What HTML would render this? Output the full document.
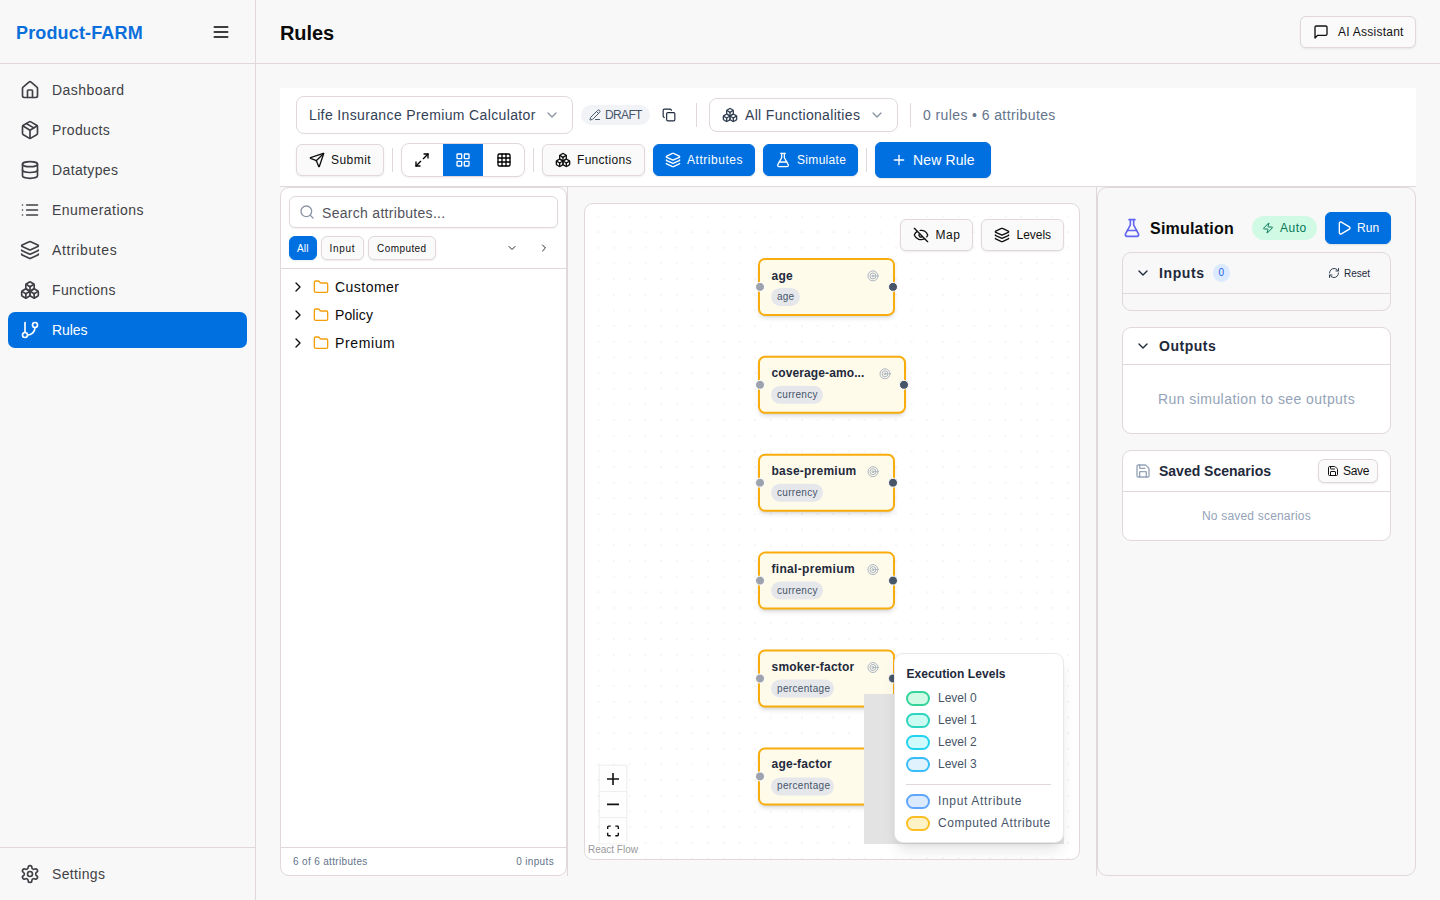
<!DOCTYPE html>
<html lang="en">
<head>
<meta charset="utf-8">
<title>Rules - Product-FARM</title>
<style>
:root{--f:"Liberation Sans",sans-serif;--bd:#e0d8da;--bg:#f8f8f8;--blue:#0070e0;--tx:#18181b;}
*{box-sizing:border-box;margin:0;padding:0}
html,body{width:1440px;height:900px;overflow:hidden;background:var(--bg);font-family:var(--f);color:var(--tx);font-size:14px}
svg{display:block;fill:none;stroke:currentColor;stroke-width:2;stroke-linecap:round;stroke-linejoin:round;flex:none}
.abs{position:absolute}
.t{white-space:nowrap;display:inline-block}
/* sidebar */
#sb{position:absolute;left:0;top:0;width:256px;height:900px;border-right:1px solid var(--bd);background:var(--bg)}
#sbh{position:absolute;left:0;top:0;width:255px;height:64px;border-bottom:1px solid var(--bd)}
#logo{position:absolute;left:16px;top:21px;font-size:18px;font-weight:700;color:#0a6fdb;line-height:24px}
#menu{position:absolute;left:211px;top:22px;width:20px;height:20px;color:#000}
.nav{position:absolute;left:8px;width:239px;height:36px;border-radius:7px;color:#3f3f46;font-size:14px}
.nav svg{position:absolute;left:12px;top:8px;width:20px;height:20px}
.nav .t{position:absolute;left:44px;top:8px;line-height:20px}
.nav.on{background:var(--blue);color:#fff}
#sbf{position:absolute;left:0;top:847px;width:255px;height:53px;border-top:1px solid var(--bd)}
/* header */
#hd{position:absolute;left:256px;top:0;width:1184px;height:64px;border-bottom:1px solid var(--bd)}
#ttl{position:absolute;left:24px;top:18.5px;font-size:20px;font-weight:700;line-height:28px;color:#0a0a0a}
.btn{position:absolute;border:1px solid var(--bd);border-radius:6px;background:#fafafa;box-shadow:0 1px 2px rgba(0,0,0,.08);color:#111;font-size:12px}
.btn svg{position:absolute}
.btn .t{position:absolute}

/* toolbar */
#tb{position:absolute;left:280px;top:88px;width:1136px;height:99px;background:#fff;border-bottom:1px solid var(--bd)}
.sel{position:absolute;border:1px solid var(--bd);border-radius:8px;background:#fff;font-size:14px;color:#334155}
.sel .t{position:absolute;line-height:20px}
.sel svg{position:absolute}
.sep{position:absolute;width:1px;height:24px;background:var(--bd)}
.ic16{width:16px;height:16px}
.ic14{width:14px;height:14px}
.ic12{width:12px;height:12px}
.bb{background:var(--blue);border-color:var(--blue);color:#fff;box-shadow:0 1px 2px rgba(0,0,0,.1)}
#draft{position:absolute;left:301px;top:17px;width:69px;height:20px;border-radius:10px;background:#f1f3f6;color:#475569;font-size:12px}
#draft svg{position:absolute;left:8px;top:4px}
#draft .t{position:absolute;left:24px;top:2px;line-height:16px}
#tg{position:absolute;left:121px;top:55px;width:124px;height:34px;border:1px solid var(--bd);border-radius:8px;background:#fff;overflow:hidden;box-shadow:0 1px 2px rgba(0,0,0,.05)}
#tg svg{position:absolute;top:8px;color:#000}
#tg .on{position:absolute;left:41px;top:0;width:40px;height:32px;background:var(--blue)}

/* left panel */
#lpw{position:absolute;left:280px;top:187px;width:288px;height:689px;border-right:1px solid var(--bd)}
#lp{position:absolute;left:0;top:0;width:287px;height:689px;border:1px solid var(--bd);border-radius:9px;background:#fff}
#srch{position:absolute;left:8px;top:8px;width:269px;height:32px;border:1px solid var(--bd);border-radius:6px;background:#fff;box-shadow:0 1px 2px rgba(0,0,0,.06)}
#srch svg{position:absolute;left:9px;top:7px;color:#8b95a5}
#srch .t{position:absolute;left:32px;top:6px;line-height:20px;font-size:14px;color:#52525b}
.chip{position:absolute;top:48px;height:24px;border:1px solid var(--bd);border-radius:6px;background:#fafafa;font-size:10px;color:#111;box-shadow:0 1px 2px rgba(0,0,0,.08)}
.chip .t{position:absolute;top:5px;line-height:14px}
.chip.on{background:var(--blue);border-color:var(--blue);color:#fff}
#lpd{position:absolute;left:0;top:80px;width:285px;height:1px;background:var(--bd)}
.tr{position:absolute;left:0;width:285px;height:28px;font-size:14px;color:#0a0a0a}
.tr svg{position:absolute;top:6px}
.tr .t{position:absolute;left:54px;top:4px;line-height:20px}
#lpf{position:absolute;left:0;top:659px;width:285px;height:28px;border-top:1px solid var(--bd);font-size:10px;color:#64748b}
#lpf .t{position:absolute;top:7px;line-height:14px}
/* canvas */
#cv{position:absolute;left:584px;top:203px;width:496px;height:657px;border:1px solid var(--bd);border-radius:9px;background:#fff;overflow:hidden;
 background-image:radial-gradient(circle,#eeeef3 0.5px,transparent 1px);background-size:15.67px 15.67px;background-position:5.67px 4.67px}
.nd{position:absolute;height:58px;border:2px solid #f8ad0c;border-radius:7px;background:#fffbeb;box-shadow:0 3px 5px -1px rgba(0,0,0,.12),0 2px 3px -2px rgba(0,0,0,.1)}
.nd .nm{position:absolute;left:11.5px;top:7.4px;font-size:12px;font-weight:600;line-height:16px;color:#1e293b}
.nd .bdg{position:absolute;left:11px;top:28px;height:18px;border-radius:10px;background:#e5e7eb;font-size:10px;color:#475569}
.nd .bdg .t{position:absolute;left:6px;top:1.6px;line-height:13px}
.nd .tg{position:absolute;top:9.5px;width:12px;height:12px;color:#94a3b8;stroke-width:1.6}
.hl,.hr{position:absolute;top:22px;width:10px;height:10px;border-radius:50%;border:1px solid #fff}
.hl{left:-5px;background:#9ca3af}
.hr{right:-5px;background:#475569}
#mm{position:absolute;left:279px;top:490px;width:200px;height:150px;background:#e3e3e3}
#lg{position:absolute;left:309px;top:449px;width:170px;height:190px;border:1px solid #ebe6e7;border-radius:9px;background:#fff;box-shadow:0 10px 15px -3px rgba(0,0,0,.1),0 4px 6px -4px rgba(0,0,0,.1);font-size:12px;color:#475569}
#lg .h{position:absolute;left:11.5px;top:12px;line-height:16px;font-weight:700;color:#1e293b}
.sw{position:absolute;left:11px;margin-top:-0.5px;width:24px;height:15px;border:2px solid;border-radius:8px}
#lg .l{position:absolute;left:43px;line-height:16px}
#ctl{position:absolute;left:15px;top:562px;width:26px;height:78px;background:#fff;box-shadow:0 0 2px 1px rgba(0,0,0,.08)}
#ctl div{position:relative;width:26px;height:26px;border-bottom:1px solid #eee;background:#fefefe}
#ctl svg{position:absolute;left:7px;top:7px;width:12px;height:12px;color:#111}
#rf{position:absolute;left:0;top:637px;height:18px;padding:2px 3px;font-size:10px;line-height:14px;color:#999;background:rgba(255,255,255,.5)}
/* sim */
#spw{position:absolute;left:1096px;top:187px;width:320px;height:689px;border-left:1px solid var(--bd)}
#sp{position:absolute;left:0;top:0;width:319px;height:689px;border:1px solid var(--bd);border-radius:10px;background:var(--bg)}
.cd{position:absolute;left:24px;width:269px;border:1px solid var(--bd);border-radius:9px;background:#fff}
.cd .hd{position:absolute;left:0;top:0;width:267px;border-bottom:1px solid var(--bd)}
.cd .ht{position:absolute;left:36px;font-size:14px;font-weight:700;line-height:20px;color:#1e293b}
</style>
</head>
<body>
<svg width="0" height="0" style="position:absolute">
<defs>
<symbol id="i-home" viewBox="0 0 24 24"><path d="M15 21v-8a1 1 0 0 0-1-1h-4a1 1 0 0 0-1 1v8"/><path d="M3 10a2 2 0 0 1 .709-1.528l7-5.999a2 2 0 0 1 2.582 0l7 5.999A2 2 0 0 1 21 10v9a2 2 0 0 1-2 2H5a2 2 0 0 1-2-2z"/></symbol>
<symbol id="i-package" viewBox="0 0 24 24"><path d="M11 21.73a2 2 0 0 0 2 0l7-4A2 2 0 0 0 21 16V8a2 2 0 0 0-1-1.73l-7-4a2 2 0 0 0-2 0l-7 4A2 2 0 0 0 3 8v8a2 2 0 0 0 1 1.73z"/><path d="M12 22V12"/><path d="m3.3 7 7.703 4.734a2 2 0 0 0 1.994 0L20.7 7"/><path d="m7.5 4.27 9 5.15"/></symbol>
<symbol id="i-db" viewBox="0 0 24 24"><ellipse cx="12" cy="5" rx="9" ry="3"/><path d="M3 5V19A9 3 0 0 0 21 19V5"/><path d="M3 12A9 3 0 0 0 21 12"/></symbol>
<symbol id="i-list" viewBox="0 0 24 24"><path d="M3 12h.01"/><path d="M3 18h.01"/><path d="M3 6h.01"/><path d="M8 12h13"/><path d="M8 18h13"/><path d="M8 6h13"/></symbol>
<symbol id="i-layers" viewBox="0 0 24 24"><path d="M12.83 2.18a2 2 0 0 0-1.66 0L2.6 6.08a1 1 0 0 0 0 1.83l8.58 3.91a2 2 0 0 0 1.66 0l8.58-3.9a1 1 0 0 0 0-1.83z"/><path d="M2 12a1 1 0 0 0 .58.91l8.6 3.91a2 2 0 0 0 1.65 0l8.58-3.9A1 1 0 0 0 22 12"/><path d="M2 17a1 1 0 0 0 .58.91l8.6 3.91a2 2 0 0 0 1.65 0l8.58-3.9A1 1 0 0 0 22 17"/></symbol>
<symbol id="i-boxes" viewBox="0 0 24 24"><path d="M2.97 12.92A2 2 0 0 0 2 14.63v3.24a2 2 0 0 0 .97 1.71l3 1.8a2 2 0 0 0 2.06 0L12 19v-5.5l-5-3-4.03 2.42Z"/><path d="m7 16.5-4.74-2.85"/><path d="m7 16.5 5-3"/><path d="M7 16.5v5.17"/><path d="M12 13.5V19l3.97 2.38a2 2 0 0 0 2.06 0l3-1.8a2 2 0 0 0 .97-1.71v-3.24a2 2 0 0 0-.97-1.71L17 10.5l-5 3Z"/><path d="m17 16.5-5-3"/><path d="m17 16.5 4.74-2.85"/><path d="M17 16.5v5.17"/><path d="M7.97 4.42A2 2 0 0 0 7 6.13v4.37l5 3 5-3V6.13a2 2 0 0 0-.97-1.71l-3-1.8a2 2 0 0 0-2.06 0l-3 1.8Z"/><path d="M12 8 7.26 5.15"/><path d="m12 8 4.74-2.85"/><path d="M12 13.5V8"/></symbol>
<symbol id="i-git" viewBox="0 0 24 24"><line x1="6" x2="6" y1="3" y2="15"/><circle cx="18" cy="6" r="3"/><circle cx="6" cy="18" r="3"/><path d="M18 9a9 9 0 0 1-9 9"/></symbol>
<symbol id="i-settings" viewBox="0 0 24 24"><path d="M12.22 2h-.44a2 2 0 0 0-2 2v.18a2 2 0 0 1-1 1.73l-.43.25a2 2 0 0 1-2 0l-.15-.08a2 2 0 0 0-2.73.73l-.22.38a2 2 0 0 0 .73 2.73l.15.1a2 2 0 0 1 1 1.72v.51a2 2 0 0 1-1 1.74l-.15.09a2 2 0 0 0-.73 2.73l.22.38a2 2 0 0 0 2.73.73l.15-.08a2 2 0 0 1 2 0l.43.25a2 2 0 0 1 1 1.73V20a2 2 0 0 0 2 2h.44a2 2 0 0 0 2-2v-.18a2 2 0 0 1 1-1.73l.43-.25a2 2 0 0 1 2 0l.15.08a2 2 0 0 0 2.73-.73l.22-.39a2 2 0 0 0-.73-2.73l-.15-.08a2 2 0 0 1-1-1.74v-.5a2 2 0 0 1 1-1.74l.15-.09a2 2 0 0 0 .73-2.73l-.22-.38a2 2 0 0 0-2.73-.73l-.15.08a2 2 0 0 1-2 0l-.43-.25a2 2 0 0 1-1-1.73V4a2 2 0 0 0-2-2z"/><circle cx="12" cy="12" r="3"/></symbol>
<symbol id="i-menu" viewBox="0 0 24 24"><line x1="4" x2="20" y1="12" y2="12"/><line x1="4" x2="20" y1="6" y2="6"/><line x1="4" x2="20" y1="18" y2="18"/></symbol>
<symbol id="i-msg" viewBox="0 0 24 24"><path d="M21 15a2 2 0 0 1-2 2H7l-4 4V5a2 2 0 0 1 2-2h14a2 2 0 0 1 2 2z"/></symbol>
<symbol id="i-cdown" viewBox="0 0 24 24"><path d="m6 9 6 6 6-6"/></symbol>
<symbol id="i-cright" viewBox="0 0 24 24"><path d="m9 18 6-6-6-6"/></symbol>
<symbol id="i-send" viewBox="0 0 24 24"><path d="M14.536 21.686a.5.5 0 0 0 .937-.024l6.5-19a.496.496 0 0 0-.635-.635l-19 6.5a.5.5 0 0 0-.024.937l7.93 3.18a2 2 0 0 1 1.112 1.11z"/><path d="m21.854 2.147-10.94 10.939"/></symbol>
<symbol id="i-max" viewBox="0 0 24 24"><polyline points="15 3 21 3 21 9"/><polyline points="9 21 3 21 3 15"/><line x1="21" x2="14" y1="3" y2="10"/><line x1="3" x2="10" y1="21" y2="14"/></symbol>
<symbol id="i-grid" viewBox="0 0 24 24"><rect width="7" height="7" x="3" y="3" rx="1"/><rect width="7" height="7" x="14" y="3" rx="1"/><rect width="7" height="7" x="14" y="14" rx="1"/><rect width="7" height="7" x="3" y="14" rx="1"/></symbol>
<symbol id="i-table" viewBox="0 0 24 24"><rect width="18" height="18" x="3" y="3" rx="2"/><path d="M3 9h18"/><path d="M3 15h18"/><path d="M9 3v18"/><path d="M15 3v18"/></symbol>
<symbol id="i-copy" viewBox="0 0 24 24"><rect width="14" height="14" x="8" y="8" rx="2" ry="2"/><path d="M4 16c-1.1 0-2-.9-2-2V4c0-1.1.9-2 2-2h10c1.1 0 2 .9 2 2"/></symbol>
<symbol id="i-pencil" viewBox="0 0 24 24"><path d="M13 21h8"/><path d="m15 5 4 4"/><path d="M21.174 6.812a1 1 0 0 0-3.986-3.987L3.842 16.174a2 2 0 0 0-.5.83l-1.321 4.352a.5.5 0 0 0 .623.622l4.353-1.32a2 2 0 0 0 .83-.497z"/></symbol>
<symbol id="i-flask" viewBox="0 0 24 24"><path d="M14 2v6a2 2 0 0 0 .245.96l5.51 10.08A2 2 0 0 1 18 22H6a2 2 0 0 1-1.755-2.96l5.51-10.08A2 2 0 0 0 10 8V2"/><path d="M6.453 15h11.094"/><path d="M8.5 2h7"/></symbol>
<symbol id="i-plus" viewBox="0 0 24 24"><path d="M5 12h14"/><path d="M12 5v14"/></symbol>
<symbol id="i-search" viewBox="0 0 24 24"><circle cx="11" cy="11" r="8"/><path d="m21 21-4.3-4.3"/></symbol>
<symbol id="i-folder" viewBox="0 0 24 24"><path d="M20 20a2 2 0 0 0 2-2V8a2 2 0 0 0-2-2h-7.9a2 2 0 0 1-1.69-.9L9.6 3.9A2 2 0 0 0 7.93 3H4a2 2 0 0 0-2 2v13a2 2 0 0 0 2 2Z"/></symbol>
<symbol id="i-eyeoff" viewBox="0 0 24 24"><path d="M10.733 5.076a10.744 10.744 0 0 1 11.205 6.575 1 1 0 0 1 0 .696 10.747 10.747 0 0 1-1.444 2.49"/><path d="M14.084 14.158a3 3 0 0 1-4.242-4.242"/><path d="M17.479 17.499a10.75 10.75 0 0 1-15.417-5.151 1 1 0 0 1 0-.696 10.75 10.75 0 0 1 4.446-5.143"/><path d="m2 2 20 20"/></symbol>
<symbol id="i-zap" viewBox="0 0 24 24"><path d="M4 14a1 1 0 0 1-.78-1.63l9.9-10.2a.5.5 0 0 1 .86.46l-1.92 6.02A1 1 0 0 0 13 10h7a1 1 0 0 1 .78 1.63l-9.9 10.2a.5.5 0 0 1-.86-.46l1.92-6.02A1 1 0 0 0 11 14z"/></symbol>
<symbol id="i-play" viewBox="0 0 24 24"><path d="M5 5a2 2 0 0 1 3.008-1.728l11.997 6.998a2 2 0 0 1 .003 3.458l-12 7A2 2 0 0 1 5 19z"/></symbol>
<symbol id="i-refresh" viewBox="0 0 24 24"><path d="M3 12a9 9 0 0 1 9-9 9.75 9.75 0 0 1 6.74 2.74L21 8"/><path d="M21 3v5h-5"/><path d="M21 12a9 9 0 0 1-9 9 9.75 9.75 0 0 1-6.74-2.74L3 16"/><path d="M8 16H3v5"/></symbol>
<symbol id="i-save" viewBox="0 0 24 24"><path d="M15.2 3a2 2 0 0 1 1.4.6l3.8 3.8a2 2 0 0 1 .6 1.4V19a2 2 0 0 1-2 2H5a2 2 0 0 1-2-2V5a2 2 0 0 1 2-2z"/><path d="M17 21v-7a1 1 0 0 0-1-1H8a1 1 0 0 0-1 1v7"/><path d="M7 3v4a1 1 0 0 0 1 1h7"/></symbol>
<symbol id="i-target" viewBox="0 0 24 24"><circle cx="12" cy="12" r="10"/><circle cx="12" cy="12" r="6"/><circle cx="12" cy="12" r="2"/></symbol>
<symbol id="i-fit" viewBox="0 0 32 30"><path d="M3.692 4.63c0-.53.4-.938.939-.938h5.215V0H4.708C2.13 0 0 2.054 0 4.63v5.216h3.692V4.631zM27.354 0h-5.2v3.692h5.17c.53 0 .984.4.984.939v5.215H32V4.631A4.624 4.624 0 0027.354 0zm.954 24.83c0 .532-.4.94-.939.94h-5.215v3.768h5.215c2.577 0 4.631-2.13 4.631-4.707v-5.139h-3.692v5.139zm-23.677.94c-.531 0-.939-.4-.939-.94v-5.138H0v5.139c0 2.577 2.13 4.707 4.708 4.707h5.138V25.77H4.631z" fill="currentColor" stroke="none"/></symbol>
</defs>
</svg>

<!-- SIDEBAR -->
<div id="sb">
  <div id="sbh">
    <div id="logo" class="t" style="letter-spacing:0.151px">Product-FARM</div>
    <svg id="menu"><use href="#i-menu"/></svg>
  </div>
  <div class="nav" style="top:72px"><svg><use href="#i-home"/></svg><span class="t" style="letter-spacing:0.443px">Dashboard</span></div>
  <div class="nav" style="top:112px"><svg><use href="#i-package"/></svg><span class="t" style="letter-spacing:0.367px">Products</span></div>
  <div class="nav" style="top:152px"><svg><use href="#i-db"/></svg><span class="t" style="letter-spacing:0.372px">Datatypes</span></div>
  <div class="nav" style="top:192px"><svg><use href="#i-list"/></svg><span class="t" style="letter-spacing:0.462px">Enumerations</span></div>
  <div class="nav" style="top:232px"><svg><use href="#i-layers"/></svg><span class="t" style="letter-spacing:0.623px">Attributes</span></div>
  <div class="nav" style="top:272px"><svg><use href="#i-boxes"/></svg><span class="t" style="letter-spacing:0.344px">Functions</span></div>
  <div class="nav on" style="top:312px"><svg><use href="#i-git"/></svg><span class="t" style="letter-spacing:-0.044px">Rules</span></div>
  <div id="sbf">
    <div class="nav" style="top:8px"><svg><use href="#i-settings"/></svg><span class="t" style="letter-spacing:0.336px">Settings</span></div>
  </div>
</div>

<!-- HEADER -->
<div id="hd">
  <div id="ttl" class="t" style="letter-spacing:-0.081px">Rules</div>
  <div class="btn" style="left:1044px;top:16px;width:116px;height:32px"><svg style="left:12px;top:7px;width:16px;height:16px"><use href="#i-msg"/></svg><span class="t" style="letter-spacing:0.249px;left:37px;top:7px;line-height:16px">AI Assistant</span></div>
</div>


<div id="tb">
  <div class="sel" style="left:16px;top:8px;width:277px;height:38px"><span class="t" style="letter-spacing:0.363px;left:12px;top:8px">Life Insurance Premium Calculator</span><svg class="ic16" style="left:247px;top:10px;color:#8b94a3"><use href="#i-cdown"/></svg></div>
  <div id="draft"><svg class="ic12"><use href="#i-pencil"/></svg><span class="t" style="letter-spacing:-0.641px">DRAFT</span></div>
  <svg class="abs ic14" style="left:382px;top:20px;color:#1e293b"><use href="#i-copy"/></svg>
  <div class="sep" style="left:416px;top:15px"></div>
  <div class="sel" style="left:429px;top:10px;width:189px;height:34px"><svg class="ic16" style="left:12px;top:8px;color:#334155"><use href="#i-boxes"/></svg><span class="t" style="letter-spacing:0.331px;left:35px;top:6px">All Functionalities</span><svg class="ic16" style="left:159px;top:8px;color:#8b94a3"><use href="#i-cdown"/></svg></div>
  <div class="sep" style="left:630px;top:15px"></div>
  <span class="t abs" style="letter-spacing:0.4px;left:643px;top:17px;line-height:20px;font-size:14px;color:#64748b">0 rules • 6 attributes</span>

  <div class="btn" style="left:16px;top:56px;width:88px;height:32px"><svg class="ic16" style="left:12px;top:7px"><use href="#i-send"/></svg><span class="t" style="letter-spacing:0.448px;left:34px;top:7px;line-height:16px">Submit</span></div>
  <div class="sep" style="left:112px;top:60px"></div>
  <div id="tg"><div class="on"></div><svg class="ic16" style="left:12px"><use href="#i-max"/></svg><svg class="ic16" style="left:53px;color:#fff"><use href="#i-grid"/></svg><svg class="ic16" style="left:94px"><use href="#i-table"/></svg></div>
  <div class="sep" style="left:253px;top:60px"></div>
  <div class="btn" style="left:262px;top:56px;width:103px;height:32px"><svg class="ic16" style="left:12px;top:7px"><use href="#i-boxes"/></svg><span class="t" style="letter-spacing:0.295px;left:34px;top:7px;line-height:16px">Functions</span></div>
  <div class="btn bb" style="left:373px;top:56px;width:102px;height:32px"><svg class="ic16" style="left:11px;top:7px"><use href="#i-layers"/></svg><span class="t" style="letter-spacing:0.533px;left:33px;top:7px;line-height:16px">Attributes</span></div>
  <div class="btn bb" style="left:483px;top:56px;width:95px;height:32px"><svg class="ic16" style="left:11px;top:7px"><use href="#i-flask"/></svg><span class="t" style="letter-spacing:0.32px;left:33px;top:7px;line-height:16px">Simulate</span></div>
  <div class="sep" style="left:586px;top:60px"></div>
  <div class="btn bb" style="left:595px;top:54px;width:116px;height:36px;font-size:14px"><svg class="ic16" style="left:15px;top:9px"><use href="#i-plus"/></svg><span class="t" style="letter-spacing:0.135px;left:37px;top:7px;line-height:20px">New Rule</span></div>
</div>

<div id="lpw"><div id="lp">
  <div id="srch"><svg class="ic16"><use href="#i-search"/></svg><span class="t" style="letter-spacing:0.298px">Search attributes...</span></div>
  <div class="chip on" style="left:8px;width:27.6px"><span class="t" style="letter-spacing:0.146px;left:7px">All</span></div>
  <div class="chip" style="left:39.6px;width:43.5px"><span class="t" style="letter-spacing:0.653px;left:8px">Input</span></div>
  <div class="chip" style="left:87.1px;width:67.5px"><span class="t" style="letter-spacing:0.414px;left:8px">Computed</span></div>
  <svg class="abs ic12" style="left:225px;top:54px;color:#27272a"><use href="#i-cdown"/></svg>
  <svg class="abs ic12" style="left:257px;top:54px;color:#27272a"><use href="#i-cright"/></svg>
  <div id="lpd"></div>
  <div class="tr" style="top:85px"><svg class="ic16" style="left:9px;color:#111"><use href="#i-cright"/></svg><svg class="ic16" style="left:32px;color:#f59e0b"><use href="#i-folder"/></svg><span class="t" style="letter-spacing:0.477px">Customer</span></div>
  <div class="tr" style="top:113px"><svg class="ic16" style="left:9px;color:#111"><use href="#i-cright"/></svg><svg class="ic16" style="left:32px;color:#f59e0b"><use href="#i-folder"/></svg><span class="t" style="letter-spacing:0.112px">Policy</span></div>
  <div class="tr" style="top:141px"><svg class="ic16" style="left:9px;color:#111"><use href="#i-cright"/></svg><svg class="ic16" style="left:32px;color:#f59e0b"><use href="#i-folder"/></svg><span class="t" style="letter-spacing:0.614px">Premium</span></div>
  <div id="lpf"><span class="t" style="letter-spacing:0.335px;left:12px">6 of 6 attributes</span><span class="t" style="letter-spacing:0.348px;right:12px">0 inputs</span></div>
</div></div>

<div id="cv">
  <div class="nd" style="left:173px;top:54px;transform:translateY(-0.1px);width:137px"><span class="t nm" style="letter-spacing:0.292px;top:8.3px">age</span><div class="bdg" style="width:29px"><span class="t" style="letter-spacing:0.24px;top:2.4px">age</span></div><svg class="tg" style="left:107px"><use href="#i-target"/></svg><i class="hl"></i><i class="hr"></i></div>
  <div class="nd" style="left:173px;top:152px;transform:translateY(-0.2px);width:148.4px"><span class="t nm" style="letter-spacing:0.109px">coverage-amo...</span><div class="bdg" style="width:52px"><span class="t" style="letter-spacing:0.301px">currency</span></div><svg class="tg" style="left:118.6px"><use href="#i-target"/></svg><i class="hl"></i><i class="hr"></i></div>
  <div class="nd" style="left:173px;top:250px;transform:translateY(-0.3px);width:137px"><span class="t nm" style="letter-spacing:0.24px">base-premium</span><div class="bdg" style="width:52px"><span class="t" style="letter-spacing:0.301px">currency</span></div><svg class="tg" style="left:107px"><use href="#i-target"/></svg><i class="hl"></i><i class="hr"></i></div>
  <div class="nd" style="left:173px;top:348px;transform:translateY(-0.4px);width:137px"><span class="t nm" style="letter-spacing:0.309px">final-premium</span><div class="bdg" style="width:52px"><span class="t" style="letter-spacing:0.301px">currency</span></div><svg class="tg" style="left:107px"><use href="#i-target"/></svg><i class="hl"></i><i class="hr"></i></div>
  <div class="nd" style="left:173px;top:446px;transform:translateY(-0.5px);width:137px"><span class="t nm" style="letter-spacing:0.225px">smoker-factor</span><div class="bdg" style="width:63px"><span class="t" style="letter-spacing:0.331px">percentage</span></div><svg class="tg" style="left:107px"><use href="#i-target"/></svg><i class="hl"></i><i class="hr"></i></div>
  <div class="nd" style="left:173px;top:544px;transform:translateY(-0.6px);width:137px"><span class="t nm" style="letter-spacing:0.236px">age-factor</span><div class="bdg" style="width:63px"><span class="t" style="letter-spacing:0.331px">percentage</span></div><svg class="tg" style="left:107px"><use href="#i-target"/></svg><i class="hl"></i><i class="hr"></i></div>
  <div id="mm"></div>
  <div id="lg">
    <span class="t h" style="letter-spacing:0.062px">Execution Levels</span>
    <i class="sw" style="top:37px;border-color:#34d399;background:#d1fae5"></i><span class="t l" style="letter-spacing:0.009px;top:36px">Level 0</span>
    <i class="sw" style="top:59px;border-color:#2dd4bf;background:#ccfbf1"></i><span class="t l" style="letter-spacing:0.009px;top:58px">Level 1</span>
    <i class="sw" style="top:81px;border-color:#22d3ee;background:#cffafe"></i><span class="t l" style="letter-spacing:0.009px;top:80px">Level 2</span>
    <i class="sw" style="top:103px;border-color:#38bdf8;background:#e0f2fe"></i><span class="t l" style="letter-spacing:0.009px;top:102px">Level 3</span>
    <i class="sw" style="top:140px;border-color:#60a5fa;background:#dbeafe"></i><span class="t l" style="letter-spacing:0.664px;top:139px">Input Attribute</span>
    <i class="sw" style="top:162px;border-color:#fbbf24;background:#fef3c7"></i><span class="t l" style="letter-spacing:0.556px;top:161px">Computed Attribute</span>
    <i class="abs" style="left:11px;top:130px;width:145px;height:1px;background:var(--bd)"></i>
  </div>
  <div class="btn" style="left:315px;top:15px;width:73px;height:32px"><svg class="ic16" style="left:12px;top:7px"><use href="#i-eyeoff"/></svg><span class="t" style="letter-spacing:0.552px;left:34.5px;top:7px;line-height:16px">Map</span></div>
  <div class="btn" style="left:396px;top:15px;width:83px;height:32px"><svg class="ic16" style="left:12px;top:7px"><use href="#i-layers"/></svg><span class="t" style="letter-spacing:-0.026px;left:34.5px;top:7px;line-height:16px">Levels</span></div>
  <div id="ctl"><div><svg viewBox="0 0 32 32"><path d="M32 18.133H18.133V32h-4.266V18.133H0v-4.266h13.867V0h4.266v13.867H32z" fill="currentColor" stroke="none"/></svg></div><div><svg viewBox="0 0 32 32"><path d="M0 12.2h32v4.2H0z" fill="currentColor" stroke="none"/></svg></div><div><svg><use href="#i-fit"/></svg></div></div>
  <div id="rf" class="t" style="letter-spacing:-0.005px">React Flow</div>
</div>

<div id="spw"><div id="sp">
  <svg class="abs" style="left:24px;top:30px;width:20px;height:20px;color:#6366f1"><use href="#i-flask"/></svg>
  <span class="t abs" style="letter-spacing:0.211px;left:52px;top:29px;font-size:16px;font-weight:600;line-height:24px;color:#0a0a0a">Simulation</span>
  <div class="abs" style="left:154px;top:28px;width:65px;height:24px;border-radius:12px;background:#d1fae5;color:#047857;font-size:12px"><svg class="abs ic12" style="left:10px;top:6px"><use href="#i-zap"/></svg><span class="t abs" style="letter-spacing:0.5px;left:28px;top:4px;line-height:16px">Auto</span></div>
  <div class="btn bb" style="left:227px;top:24px;width:66px;height:32px"><svg class="ic16" style="left:10px;top:7px"><use href="#i-play"/></svg><span class="t" style="letter-spacing:0.094px;left:31px;top:7px;line-height:16px">Run</span></div>

  <div class="cd" style="top:64px;height:59px;background:var(--bg)">
    <div class="hd" style="height:41px"></div>
    <svg class="abs ic16" style="left:12px;top:12px;color:#1e293b"><use href="#i-cdown"/></svg>
    <span class="t ht" style="letter-spacing:0.602px;top:10px">Inputs</span>
    <div class="abs" style="left:90px;top:11px;width:17px;height:18px;border-radius:9px;background:#dbeafe;color:#2563eb;font-size:10px"><span class="t abs" style="letter-spacing:0.172px;left:5.5px;top:2px;line-height:14px">0</span></div>
    <svg class="abs ic12" style="left:205px;top:14px;color:#334155"><use href="#i-refresh"/></svg>
    <span class="t abs" style="letter-spacing:-0.044px;left:221px;top:14px;font-size:10px;line-height:14px;color:#1e293b">Reset</span>
  </div>

  <div class="cd" style="top:139px;height:107px">
    <div class="hd" style="height:37px"></div>
    <svg class="abs ic16" style="left:12px;top:10px;color:#1e293b"><use href="#i-cdown"/></svg>
    <span class="t ht" style="letter-spacing:0.522px;top:8px">Outputs</span>
    <span class="t abs" style="letter-spacing:0.436px;left:35px;top:61px;font-size:14px;line-height:20px;color:#94a3b8">Run simulation to see outputs</span>
  </div>

  <div class="cd" style="top:262px;height:91px">
    <div class="hd" style="height:41px"></div>
    <svg class="abs ic16" style="left:12px;top:12px;color:#94a3b8"><use href="#i-save"/></svg>
    <span class="t ht" style="letter-spacing:-0.007px;top:10px">Saved Scenarios</span>
    <div class="btn" style="left:195px;top:8px;width:60px;height:24px"><svg class="ic12" style="left:8px;top:5px"><use href="#i-save"/></svg><span class="t" style="letter-spacing:-0.293px;left:24px;top:3px;line-height:16px">Save</span></div>
    <span class="t abs" style="letter-spacing:0.192px;left:79px;top:57px;font-size:12px;line-height:16px;color:#94a3b8">No saved scenarios</span>
  </div>
</div></div>


</body>
</html>
